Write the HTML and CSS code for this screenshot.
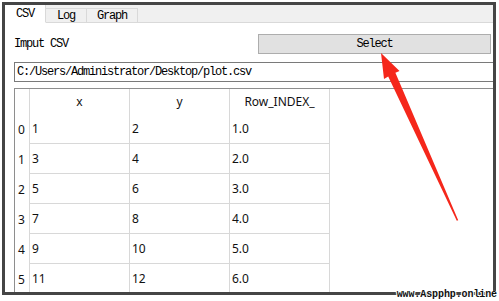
FILE: index.html
```html
<!DOCTYPE html>
<html>
<head lang="en">
    <meta charset="UTF-8">
    <title>CSV</title>
    <link rel="stylesheet" href="styles.css">
</head>
<body>

<div id="window">
    <div class="tabbar">
        <div class="tab active">CSV</div>
        <div class="tab">Log</div>
        <div class="tab wide">Graph</div>
    </div>
    <div class="pane">
        <div class="input-row">
            <span class="label">Imput CSV</span>
            <div class="btn">Select</div>
        </div>
        <div class="path">C:/Users/Administrator/Desktop/plot.csv</div>
        <div class="table">
            <div class="corner"></div>
            <div class="head">x</div>
            <div class="head">y</div>
            <div class="head">Row_INDEX_</div>
            <div class="blank"></div>

            <div class="vh">0</div><div class="cell">1</div><div class="cell">2</div><div class="cell">1.0</div><div class="blank"></div>
            <div class="vh">1</div><div class="cell">3</div><div class="cell">4</div><div class="cell">2.0</div><div class="blank"></div>
            <div class="vh">2</div><div class="cell">5</div><div class="cell">6</div><div class="cell">3.0</div><div class="blank"></div>
            <div class="vh">3</div><div class="cell">7</div><div class="cell">8</div><div class="cell">4.0</div><div class="blank"></div>
            <div class="vh">4</div><div class="cell">9</div><div class="cell">10</div><div class="cell">5.0</div><div class="blank"></div>
            <div class="vh">5</div><div class="cell">11</div><div class="cell">12</div><div class="cell">6.0</div><div class="blank"></div>
        </div>
    </div>
</div>

<!-- red annotation arrow pointing at the Select button -->
<svg class="arrow" width="499" height="301" viewBox="0 0 499 301">
    <polygon points="381,53 399.5,71 395.4,72.8 458.2,220.3 456.8,220.8 388.2,76.4 384,79" fill="#f5271b"/>
</svg>

<div class="mark">www.Aspphp.online</div>

</body>
</html>
```

FILE: styles.css
```css
html,body{
    margin: 0;
    padding: 0;
    background: #fff;
}
body{
    position: relative;
    width: 499px;
    height: 301px;
    overflow: hidden;
}
#window{
    position: relative;
    box-sizing: border-box;
    height: 293px;
    margin: 2px 3px 0 2px;
    border: 3px solid #454545;
    background: #fff;
    overflow: hidden;
    font-family: "Liberation Mono", "DejaVu Sans Mono", monospace;
    font-size: 12px;
    letter-spacing: -1.2px;
    color: #000;
}
.tabbar{
    display: flex;
    align-items: flex-end;
    height: 18px;
    box-sizing: border-box;
    border-bottom: 1px solid #d9d9d9;
    background: #f0f0f0;
}
.tab{
    box-sizing: border-box;
    width: 41px;
    height: 15px;
    display: flex;
    align-items: center;
    justify-content: center;
    background: #f0f0f0;
    border-top: 1px solid #d9d9d9;
    border-right: 1px solid #d9d9d9;
    margin-bottom: -1px;
    border-bottom: 1px solid #d9d9d9;
}
.tab.wide{
    width: 51px;
}
.tab.active{
    height: 18px;
    background: #fff;
    border-top: none;
    border-bottom: 1px solid #fff;
}
.pane{
    padding: 11px 0 0 9px;
}
.input-row{
    display: flex;
    align-items: center;
    height: 20px;
}
.label{
    width: 244px;
}
.btn{
    box-sizing: border-box;
    width: 233px;
    height: 20px;
    display: flex;
    align-items: center;
    justify-content: center;
    background: #e1e1e1;
    border: 1px solid #adadad;
}
.path{
    box-sizing: border-box;
    width: 482px;
    height: 20px;
    margin-top: 8px;
    padding-left: 2px;
    display: flex;
    align-items: center;
    border: 1px solid #7a7a7a;
}
.table{
    display: grid;
    grid-template-columns: 15px 100px 100px 100px 200px;
    grid-template-rows: 25px repeat(6, 30px);
    margin-top: 6px;
    border-top: 1px solid #8e8e8e;
    border-left: 1px solid #8e8e8e;
    font-family: "Noto Sans", "Open Sans", sans-serif;
    font-size: 12px;
    letter-spacing: 0;
    color: #111;
}
.corner,.head,.vh,.cell{
    box-sizing: border-box;
    border-right: 1px solid #d8d8d8;
    display: flex;
    align-items: center;
}
.head{
    justify-content: center;
    padding-bottom: 1px;
}
.vh{
    justify-content: center;
    padding-right: 1px;
}
.cell{
    border-bottom: 1px solid #d8d8d8;
    padding-left: 2px;
}
.arrow{
    position: absolute;
    top: 0;
    left: 0;
}
.mark{
    position: absolute;
    right: 2px;
    bottom: 1px;
    font-family: "Liberation Mono", monospace;
    font-weight: bold;
    font-size: 10px;
    letter-spacing: -0.1px;
    color: #111;
    text-shadow: 0 0 1px #fff, 1px 0 0 #fff, -1px 0 0 #fff, 0 1px 0 #fff;
}
```
